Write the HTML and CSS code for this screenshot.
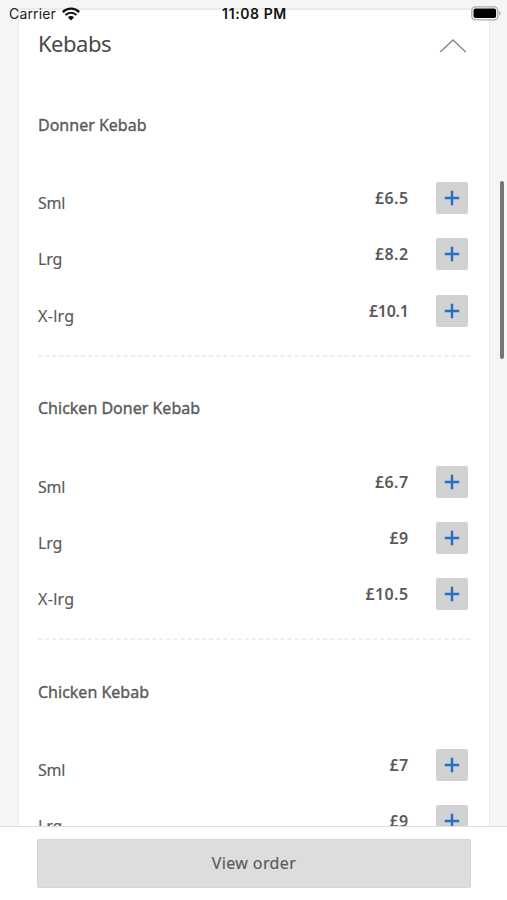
FILE: index.html
```html
<!DOCTYPE html>
<html lang="en">
<head>
<meta charset="utf-8">
<meta name="viewport" content="width=device-width, initial-scale=1">
<title>Kebabs</title>
<link rel="stylesheet" href="styles.css">
</head>
<body>
<svg class="defs" width="0" height="0"><symbol id="plus" viewBox="0 0 16 16"><path d="M8 .8v14.4M.8 8h14.4" fill="none" stroke="#256fc9" stroke-width="2.4"/></symbol></svg>
<div class="screen">
  <header class="status">
    <div class="carrier"><span>Carrier</span>
      <svg width="18" height="14" viewBox="0 0 18 14"><path d="M.8 5.1a11.6 11.6 0 0 1 16.4 0M3.5 8a7.8 7.8 0 0 1 11 0" fill="none" stroke="#111" stroke-width="2.2"/><path d="M5.9 10.3a4.4 4.4 0 0 1 6.2 0L9 13.5z" fill="#111"/></svg>
    </div>
    <time class="clock">11:08 PM</time>
    <svg class="battery" width="30" height="15" viewBox="0 0 30 15"><rect x=".8" y=".8" width="26" height="13" rx="3.6" fill="#fff" stroke="#aaa" stroke-width="1.3"/><rect x="2.5" y="2.5" width="22.6" height="9.6" rx="2" fill="#000"/><path d="M28.2 5v4.6q1.6-.8 1.6-2.3T28.2 5z" fill="#aaa"/></svg>
  </header>
  <main class="list">
    <section class="card">
      <div class="card-head"><h1>Kebabs</h1><svg class="chevron" width="28" height="16" viewBox="0 0 28 16"><path d="M1.3 14L14 2l12.7 12" fill="none" stroke="#858585" stroke-width="1.3"/></svg></div>
      <article class="item">
        <h2>Donner Kebab</h2>
        <div class="row"><span class="size">Sml</span><span class="price">£6.5</span><button aria-label="Add"><svg><use href="#plus"/></svg></button></div>
        <div class="row"><span class="size">Lrg</span><span class="price">£8.2</span><button aria-label="Add"><svg><use href="#plus"/></svg></button></div>
        <div class="row"><span class="size wide">X-lrg</span><span class="price narrow">£10.1</span><button aria-label="Add"><svg><use href="#plus"/></svg></button></div>
        <svg class="divider"><line x1="0" y1="1" x2="432" y2="1"/></svg>
      </article>
      <article class="item">
        <h2>Chicken Doner Kebab</h2>
        <div class="row"><span class="size">Sml</span><span class="price">£6.7</span><button aria-label="Add"><svg><use href="#plus"/></svg></button></div>
        <div class="row"><span class="size">Lrg</span><span class="price">£9</span><button aria-label="Add"><svg><use href="#plus"/></svg></button></div>
        <div class="row"><span class="size wide">X-lrg</span><span class="price">£10.5</span><button aria-label="Add"><svg><use href="#plus"/></svg></button></div>
        <svg class="divider"><line x1="0" y1="1" x2="432" y2="1"/></svg>
      </article>
      <article class="item">
        <h2>Chicken Kebab</h2>
        <div class="row"><span class="size">Sml</span><span class="price">£7</span><button aria-label="Add"><svg><use href="#plus"/></svg></button></div>
        <div class="row"><span class="size">Lrg</span><span class="price">£9</span><button aria-label="Add"><svg><use href="#plus"/></svg></button></div>
      </article>
    </section>
    <div class="scrollbar"></div>
  </main>
  <footer class="bar"><button class="order">View order</button></footer>
</div>
</body>
</html>
```
FILE: styles.css
```css
* { box-sizing: border-box; }
body { margin: 0; overflow: hidden; font-family: "Noto Sans", sans-serif; color: #5a5a5a; }
.defs { position: absolute; }
.screen { position: relative; display: flex; flex-direction: column; width: 507px; height: 900px; background: #f5f5f5; }
.status { position: absolute; z-index: 2; top: 0; left: 0; width: 100%; height: 27px; padding: 0 6px 0 9px; display: grid; grid-template-columns: 1fr auto 1fr; align-items: center; font-family: Inter, sans-serif; color: #222; }
.carrier { display: flex; align-items: center; gap: 6px; font-size: 14px; letter-spacing: .15px; }
.clock { margin-right: 1px; font-size: 14px; font-weight: 600; letter-spacing: .6px; color: #111; }
.battery { justify-self: end; }
.list { position: relative; height: 825.5px; padding: 8px 17px 0 18px; overflow: hidden; }
.card { height: 900px; padding: 0 19px; background: #fff; border: 1px solid #ebebeb; border-width: 2px 1px 1px; }
.card-head { display: flex; justify-content: space-between; height: 63.2px; }
h1, h2 { margin: 0; }
h1 { font-size: 22px; font-weight: 400; line-height: 30px; padding-top: 18px; letter-spacing: -.5px; color: #484848; }
.chevron { margin: 27.5px 3px 0 0; }
.item { height: 283.3px; padding-top: 39px; }
h2 { height: 26px; margin-bottom: 44.1px; font-size: 16px; line-height: 26px; font-weight: 400; -webkit-text-stroke: .35px #5a5a5a; }
.row { display: flex; align-items: center; height: 32px; margin-bottom: 24.2px; padding-right: 2.5px; }
.size { flex: 1; padding-top: 10px; font-size: 16px; letter-spacing: -.2px; -webkit-text-stroke: .15px #5a5a5a; }
.size.wide { letter-spacing: .3px; }
.price { margin-right: 27px; font-size: 16px; font-weight: 600; letter-spacing: .4px; }
.price.narrow { letter-spacing: -.3px; }
.row button { display: grid; place-items: center; width: 32px; height: 32px; padding: 0; border: 0; border-radius: 2px; background: #d2d2d2; }
.row button svg { width: 16px; height: 16px; }
.divider { display: block; width: 432px; height: 2px; margin-top: 29.4px; margin-top: 5px; position: relative; top: 4.2px; }
.divider line { stroke: #ddd; stroke-width: 1.2; stroke-dasharray: 4 3.13; }
.scrollbar { position: absolute; top: 181px; right: 3.5px; width: 4px; height: 178px; border-radius: 2px; background: #757575; }
.bar { flex: 1; padding: 12px 36px 0 37px; background: #fff; border-top: 1.5px solid #ddd; }
.order { display: block; width: 100%; height: 49px; padding: 0; border: 1px solid #d6d6d6; border-radius: 2px; background: #ddd; font: 400 16px "Noto Sans", sans-serif; letter-spacing: .4px; color: #5a5a5a; -webkit-text-stroke: .15px #5a5a5a; }
```
